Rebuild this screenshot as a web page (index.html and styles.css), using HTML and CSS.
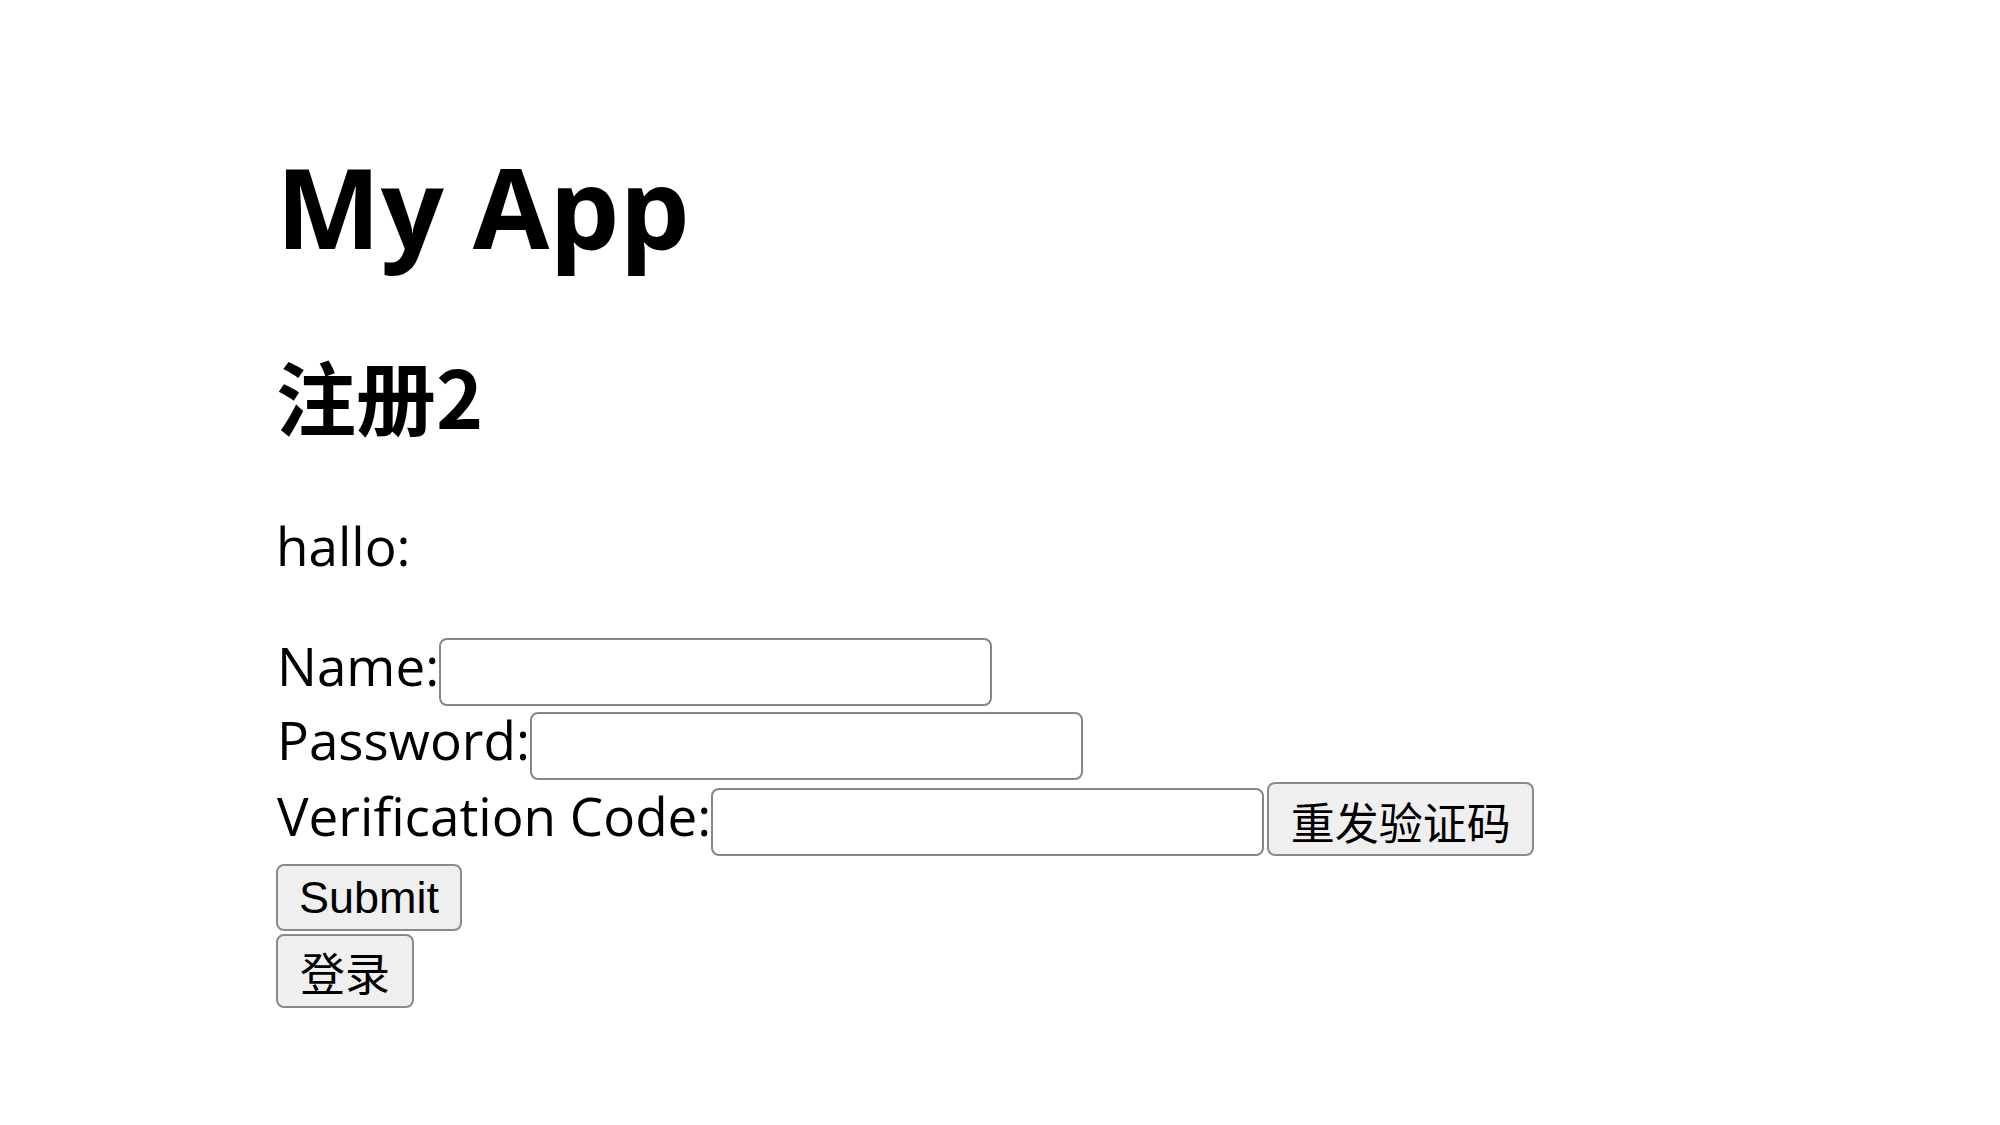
FILE: index.html
```html
<!DOCTYPE html>
<html lang="zh">
<head>
<meta charset="UTF-8">
<title>My App</title>
<link rel="stylesheet" href="styles.css">
</head>
<body>
<div class="page">
    <h1 class="title">My App</h1>
    <h2 class="subtitle">注册2</h2>
    <p class="greet">hallo:</p>
    <form class="form">
        <div class="row">
            <label class="label">Name:</label><input class="field" type="text">
        </div>
        <div class="row">
            <label class="label">Password:</label><input class="field" type="password">
        </div>
        <div class="row row-code">
            <label class="label">Verification Code:</label><input class="field" type="text"><button class="btn btn-resend" type="button">重发验证码</button>
        </div>
        <div class="row-btn">
            <button class="btn btn-submit" type="submit">Submit</button>
        </div>
        <div class="row-btn">
            <button class="btn btn-login" type="button">登录</button>
        </div>
    </form>
</div>
</body>
</html>
```

FILE: styles.css
```css
body{margin:0; background:#fff; color:#000; font-family:"Open Sans", "Noto Sans CJK SC", sans-serif;}
.page{padding:131px 0 0 276px;}

.title{margin:0; font-size:111px; line-height:150px; font-weight:700;}
.subtitle{margin:58px 0 0 0; font-size:80px; line-height:110px; font-weight:700; font-family:"Noto Sans CJK SC", sans-serif;}
.greet{margin:60px 0 0 0; font-size:53px; line-height:74px;}

.form{margin:52px 0 0 0;}
.row{display:flex; align-items:center; height:74px; font-size:53px;}
.row-code{align-items:flex-end; padding-bottom:1px; height:73px;}
.label{white-space:nowrap; padding:0 0 12px 1px; line-height:62px;}
.row-code .label{align-self:center; padding-bottom:8px;}

.field{box-sizing:border-box; width:553px; height:68px; margin:0; padding:0 8px; border:2px solid #878787; border-radius:8px; background:#fff; font-size:46px;}
.row-code .field{margin-right:3px;}

.row-btn{display:flex;}
.btn{box-sizing:border-box; margin:0; border:2px solid #8a8a8a; border-radius:8px; background:#efefef; color:#000; font-family:"Liberation Sans", "Noto Sans CJK SC", sans-serif; font-size:45px; padding:0; white-space:nowrap; text-align:center;}
.btn-resend{height:74px; width:267px; font-size:44px; padding-top:4px;}
.btn-submit{margin-top:7px; height:67px; width:186px;}
.btn-login{margin-top:3px; height:74px; width:138px; font-size:45px;}
```
